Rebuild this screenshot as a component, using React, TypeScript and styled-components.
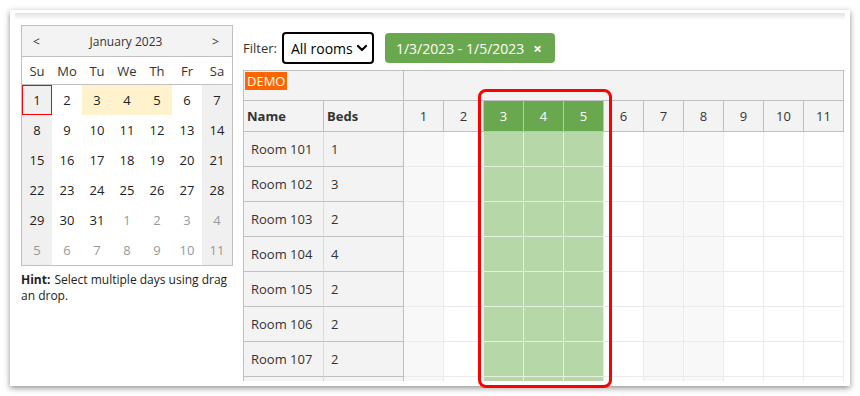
import React from 'react';
import styled, { createGlobalStyle } from 'styled-components';

// === GLOBAL ===
const GlobalStyle = createGlobalStyle`
    html, body { margin: 0; padding: 0; background: #fff; }
    body { font-family: "Open Sans", "Noto Sans", sans-serif; color: #333; }
    * { box-sizing: border-box; }
`;

// === STYLED COMPONENTS ===
const Root = styled.div` position: relative; width: 860px; height: 396px; overflow: hidden; `;
const Frame = styled.div`
    position: relative; margin: 10px; width: 840px; height: 376px; background: #fff;
    box-shadow: 0 2px 6px rgba(0,0,0,0.45);
    &::before {
        content: ''; position: absolute; left: 5px; right: 5px; top: 3px; height: 7px;
        background: linear-gradient(#e2e2e2, #fff);
    }
`;
const Main = styled.div` display: flex; align-items: flex-start; gap: 10px; padding: 15px 0 0 11px; `;

// calendar
const CalendarWrap = styled.div` width: 212px; `;
const Calendar = styled.div` border: 1px solid #c0c0c0; font-size: 13px; `;
const CalHeader = styled.div`
    display: flex; align-items: center; justify-content: space-between; height: 31px;
    background: #f3f3f3; border-bottom: 1px solid #c0c0c0; padding: 0 13px 0 11px; font-size: 12px;
`;
const NavArrow = styled.span` font-size: 12px; color: #333; `;
const DayNames = styled.div` display: grid; grid-template-columns: repeat(7, 30px); border-bottom: 1px solid #c0c0c0; `;
const DayName = styled.div` height: 27px; display: flex; align-items: center; justify-content: center; `;
const DayGrid = styled.div` display: grid; grid-template-columns: repeat(7, 30px); `;
const Day = styled.div<{ $weekend?: boolean; $selected?: boolean; $other?: boolean; $today?: boolean }>`
    height: 30px; display: flex; align-items: center; justify-content: center;
    color: ${p => (p.$other ? '#999' : '#222')};
    background: ${p => (p.$selected ? '#fff2cc' : p.$weekend || p.$today ? '#f0f0f0' : '#fff')};
    border: 1px solid ${p => (p.$today ? '#f00' : 'transparent')};
`;
const Hint = styled.p` margin: 6px 0 0; font-size: 12px; line-height: 16px; color: #222; `;
const HintLabel = styled.span` font-weight: 700; margin-right: 1px; `;

// scheduler
const Scheduler = styled.div` width: 601px; margin-top: 7px; `;
const FilterBar = styled.div` display: flex; align-items: center; height: 32px; font-size: 13px; `;
const FilterLabel = styled.span` margin-right: 5px; `;
const SelectBox = styled.div`
    width: 92px; height: 32px; border: 2px solid #000; border-radius: 4px; display: flex; align-items: center;
    justify-content: space-between; padding: 0 4px 0 7px; font-size: 14px; color: #000; background: #fff;
    white-space: nowrap;
`;
const Tag = styled.div`
    margin-left: 11px; height: 30px; width: 170px; border-radius: 4px; background: #6aa84f; color: #fff;
    display: flex; align-items: center; justify-content: space-between; padding: 0 13px 0 11px; font-size: 14px;
    white-space: nowrap;
`;
const TagClose = styled.span` font-weight: 700; font-size: 15px; `;
const Grid = styled.div`
    margin-top: 6px; height: 311px; overflow: hidden; display: grid;
    grid-template-columns: 80px 80px repeat(11, 40px); grid-auto-rows: 35px; grid-template-rows: 30px 31px;
    border-left: 1px solid #c0c0c0; border-top: 1px solid #c0c0c0; font-size: 13px;
`;
const HeadCell = styled.div<{ $span?: number; $selected?: boolean; $bold?: boolean; $left?: boolean }>`
    grid-column: span ${p => p.$span || 1};
    background: ${p => (p.$selected ? '#6aa84f' : '#f3f3f3')};
    color: ${p => (p.$selected ? '#fff' : '#333')};
    font-weight: ${p => (p.$bold ? 700 : 400)};
    border-right: 1px solid #c0c0c0; border-bottom: 1px solid #c0c0c0;
    display: flex; align-items: center; justify-content: ${p => (p.$left ? 'flex-start' : 'center')};
    padding-left: ${p => (p.$left ? '3px' : '0')};
`;
const Corner = styled.div`
    grid-column: span 2; background: #f3f3f3; border-right: 1px solid #c0c0c0; border-bottom: 1px solid #c0c0c0;
    padding: 1px;
`;
const DemoLabel = styled.span` display: inline-block; background: #ff6600; color: #fff; padding: 0 2px; line-height: 18px; `;
const RowHeader = styled.div<{ $wide?: boolean }>`
    background: #f3f3f3; border-right: 1px solid ${p => (p.$wide ? '#dcdcdc' : '#c0c0c0')}; border-bottom: 1px solid #c0c0c0;
    display: flex; align-items: center; padding-left: 7px; color: #333;
`;
const Cell = styled.div<{ $kind: 'normal' | 'weekend' | 'selected' }>`
    background: ${p => (p.$kind === 'selected' ? '#b6d7a8' : p.$kind === 'weekend' ? '#f8f8f8' : '#fff')};
    border-right: 1px solid ${p => (p.$kind === 'selected' ? '#e6f0e1' : '#ebebeb')};
    border-bottom: 1px solid ${p => (p.$kind === 'selected' ? '#e6f0e1' : '#ebebeb')};
`;
const Highlight = styled.div`
    position: absolute; left: 478px; top: 89px; width: 134px; height: 299px;
    border: 3px solid #f00; border-radius: 8px; pointer-events: none;
`;

// === DATA ===
const dayNames = ['Su', 'Mo', 'Tu', 'We', 'Th', 'Fr', 'Sa'];
const calDays: { d: number; other?: boolean }[] = [
    ...Array.from({ length: 31 }, (_, i) => ({ d: i + 1 })),
    ...Array.from({ length: 11 }, (_, i) => ({ d: i + 1, other: true })),
];
// last row is only partly visible, its labels fall below the fold
const rooms = [
    ['Room 101', '1'], ['Room 102', '3'], ['Room 103', '2'], ['Room 104', '4'],
    ['Room 105', '2'], ['Room 106', '2'], ['Room 107', '2'], ['', ''],
];
const days = Array.from({ length: 11 }, (_, i) => i + 1);
const kindOf = (d: number) => (d >= 3 && d <= 5 ? 'selected' : d === 1 || d === 7 || d === 8 ? 'weekend' : 'normal');

const Chevron = () => (
    <svg width="12" height="12" viewBox="0 0 12 12">
        <path d="M2 4 L6 8 L10 4" fill="none" stroke="#000" strokeWidth="2.2" strokeLinecap="round" strokeLinejoin="round" />
    </svg>
);

const App: React.FC = () => (
    <Root>
        <GlobalStyle />
        <Frame>
            <Main>
                <CalendarWrap>
                    <Calendar>
                        <CalHeader>
                            <NavArrow>&lt;</NavArrow>
                            <span>January 2023</span>
                            <NavArrow>&gt;</NavArrow>
                        </CalHeader>
                        <DayNames>
                            {dayNames.map(n => <DayName key={n}>{n}</DayName>)}
                        </DayNames>
                        <DayGrid>
                            {calDays.map((c, i) => {
                                const col = i % 7;
                                return (
                                    <Day
                                        key={i}
                                        $other={c.other}
                                        $today={i === 0}
                                        $weekend={i !== 0 && (col === 0 || col === 6)}
                                        $selected={!c.other && c.d >= 3 && c.d <= 5}
                                    >
                                        {c.d}
                                    </Day>
                                );
                            })}
                        </DayGrid>
                    </Calendar>
                    <Hint><HintLabel>Hint:</HintLabel> Select multiple days using drag an drop.</Hint>
                </CalendarWrap>

                <Scheduler>
                    <FilterBar>
                        <FilterLabel>Filter:</FilterLabel>
                        <SelectBox>All rooms <Chevron /></SelectBox>
                        <Tag><span>1/3/2023 - 1/5/2023</span><TagClose>×</TagClose></Tag>
                    </FilterBar>
                    <Grid>
                        <Corner><DemoLabel>DEMO</DemoLabel></Corner>
                        <HeadCell $span={11} />
                        <HeadCell $bold $left>Name</HeadCell>
                        <HeadCell $bold $left>Beds</HeadCell>
                        {days.map(d => <HeadCell key={d} $selected={d >= 3 && d <= 5}>{d}</HeadCell>)}
                        {rooms.map(([name, beds], i) => (
                            <React.Fragment key={i}>
                                <RowHeader $wide>{name}</RowHeader>
                                <RowHeader>{beds}</RowHeader>
                                {days.map(d => <Cell key={d} $kind={kindOf(d)} />)}
                            </React.Fragment>
                        ))}
                    </Grid>
                </Scheduler>
            </Main>
        </Frame>
        <Highlight />
    </Root>
);

export default App;
